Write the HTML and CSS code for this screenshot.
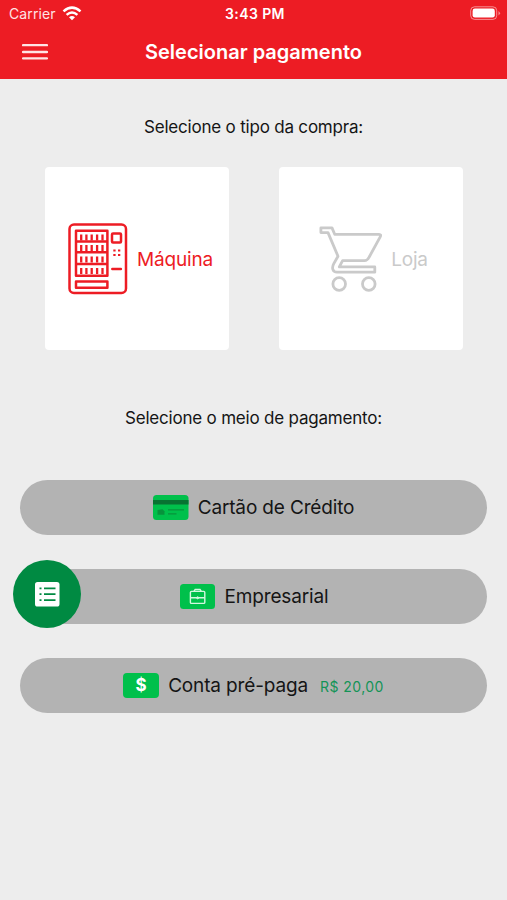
FILE: index.html
```html
<!DOCTYPE html>
<html lang="pt-BR">
<head>
<meta charset="utf-8">
<title>Selecionar pagamento</title>
<link rel="stylesheet" href="styles.css">
</head>
<body>
<header class="header">
  <div class="status">
    <div class="carrier"><span>Carrier</span>
      <svg width="20" height="15" viewBox="0 0 20 15" fill="none" stroke="#fff" stroke-width="2.5"><path d="M1.5 5.4Q10-2.2 18.5 5.4M4.6 8.9Q10 4.2 15.4 8.9"/><path d="M7 11.2Q10 8.9 13 11.2L10 14.2Z" fill="#fff" stroke="none"/></svg>
    </div>
    <span class="clock">3:43 PM</span>
    <svg class="battery" width="31" height="15" viewBox="0 0 31 15"><rect x=".7" y=".8" width="26" height="12.6" rx="3.8" fill="none" stroke="#fff" stroke-opacity=".5"/><rect x="2.6" y="2.6" width="22.2" height="9" rx="2.3" fill="#fff"/><path d="M28.5 5v4.5q3-2.2 0-4.5" fill="#fff" fill-opacity=".5"/></svg>
  </div>
  <div class="nav">
    <svg class="menu" width="26" height="16" viewBox="0 0 26 16" stroke="#ffe3e4" stroke-width="2.3" stroke-linecap="round"><path d="M1 1.2h24M1 8h24M1 14.4h24"/></svg>
    <h1 class="title">Selecionar pagamento</h1>
  </div>
</header>
<main class="main">
  <p class="prompt prompt-type">Selecione o tipo da compra:</p>
  <div class="types">
    <div class="card active">
      <svg width="60" height="72" viewBox="0 0 60 72" fill="none" stroke="#ed1c24" stroke-width="2.5" stroke-linejoin="round">
        <rect x="1.5" y="1.5" width="56.5" height="68.5" rx="4.5"/>
        <path d="M8 7.8h31.4v45H8zM8 18.4h31.4M8 29.2h31.4M8 41h31.4M8 58.5h31.4v6.2H8z"/>
        <path stroke-width="2.3" d="M13.2 11.5v6M18.4 11.5v6M23.7 11.5v6M29.1 11.5v6M34.5 11.5v6M13.2 22v6M18.4 22v6M23.7 22v6M29.1 22v6M34.5 22v6M13.2 33.5v6M18.4 33.5v6M23.7 33.5v6M29.1 33.5v6M34.5 33.5v6M13.2 45v6M18.4 45v6M23.7 45v6M29.1 45v6M34.5 45v6"/>
        <rect x="44" y="10.5" width="9" height="9" rx="1"/>
        <path stroke-width="2" d="M45.3 27.5h2.3M50 27.5h2.3M45.3 32h2.3M50 32h2.3"/><path d="M44.3 46h8.6" stroke-linecap="round"/>
      </svg>
      <span class="machine-label">Máquina</span>
    </div>
    <div class="card">
      <svg width="64" height="66" viewBox="0 0 64 66" fill="none" stroke="#cacaca" stroke-width="2.8" stroke-linejoin="round"><path d="M1.9 1.9H13L15.7 8.3H60Q62.5 8.4 61.2 10.8L50.2 31Q48.4 34.7 45.5 34.7H23.6L20.3 40.9H55.8V46.2H18C13.4 46.2 12.6 41.5 14.8 37.6L19 30.2L9 6.6H1.9Z"/><circle cx="20.2" cy="58" r="6.3"/><circle cx="49.8" cy="58" r="6.3"/></svg>
      <span class="store-label">Loja</span>
    </div>
  </div>
  <p class="prompt prompt-method">Selecione o meio de pagamento:</p>
  <div class="methods">
    <div class="pill credit">
      <svg width="36" height="26" viewBox="0 0 36 26"><rect width="35.5" height="25" rx="3.5" fill="#00c04b"/><path d="M0 5h35.5v4.6H0z" fill="#087332"/><path d="M4.5 15l5-.7 2 2v3.5h-7z" fill="#07933c"/><path d="M15 14.8h16M15 18.8h8.5" stroke="#07933c" stroke-width="1.3"/></svg>
      <span class="method-name">Cartão de Crédito</span>
    </div>
    <div class="pill business">
      <svg width="36" height="26" viewBox="0 0 36 26"><rect width="35" height="25" rx="3.5" fill="#00c04b"/><g fill="none" stroke="#d3f7df" stroke-width="1.4"><rect x="10.4" y="7.4" width="14.4" height="12" rx="1"/><path d="M14 7.2l1.2-1.7h4.8l1.2 1.7M10.4 13.8h14.4"/><circle cx="17.6" cy="13.8" r="1" fill="#d3f7df" stroke-width="1"/></g></svg>
      <span class="method-name">Empresarial</span>
      <div class="fab"><svg width="25" height="25" viewBox="0 0 25 25"><rect width="24.5" height="24.5" rx="2.6" fill="#fff"/><path d="M4.5 6.4h2M9 6.4h11.5M4.5 12.2h2M9 12.2h11.5M4.5 18.2h2M9 18.2h11.5" stroke="#008a42" stroke-width="1.7"/></svg></div>
    </div>
    <div class="pill prepaid">
      <span class="money">$</span>
      <span class="method-name">Conta pré-paga</span>
      <span class="balance">R$ 20,00</span>
    </div>
  </div>
</main>
</body>
</html>
```
FILE: styles.css
```css
* { box-sizing: border-box; }
body { margin: 0; min-height: 900px; background: #ededed; color: #151515; font-family: Inter, "Liberation Sans", sans-serif; }
svg { display: block; flex: none; }
.header { height: 79px; background: #ed1c24; color: #fff; }
.status { height: 27px; display: grid; grid-template-columns: 1fr auto 1fr; align-items: center; padding: 0 6px 0 9px; }
.carrier { display: flex; gap: 6px; align-items: center; font-size: 14px; letter-spacing: .1px; color: #ffe3e4; }
.clock { font-size: 14px; font-weight: 600; letter-spacing: .4px; }
.battery { justify-self: end; }
.nav { height: 50px; display: grid; grid-template-columns: 26px 1fr 26px; align-items: center; padding: 0 22px; }
.title { margin: 0; text-align: center; font-size: 20px; font-weight: 600; line-height: 28px; white-space: nowrap; }
.main { display: flex; flex-direction: column; }
.prompt { margin: 0; text-align: center; font-size: 17px; line-height: 24px; letter-spacing: -.2px; }
.prompt-type { margin-top: 36px; }
.types { margin: 28px 44px 0 45px; display: grid; grid-template-columns: 184px 184px; justify-content: space-between; }
.card { height: 183px; padding: 1px 0 0 5px; background: #fff; border-radius: 4px; display: flex; align-items: center; justify-content: center; gap: 8px; color: #cacaca; font-size: 19px; letter-spacing: -.2px; }
.active { padding-left: 7px; color: #ed1c24; gap: 9px; }
.prompt-method { margin-top: 56px; }
.methods { margin: 50px 20px 0; display: grid; gap: 34px; }
.pill { position: relative; height: 55px; border-radius: 28px; background: #b3b3b3; display: flex; justify-content: center; align-items: center; gap: 9px; }
.method-name { font-size: 19px; letter-spacing: -.15px; white-space: nowrap; }
.business { padding-left: 1px; }
.fab { position: absolute; left: -7px; top: -9px; width: 68px; height: 68px; border-radius: 50%; background: #008a42; display: flex; align-items: center; justify-content: center; }
.money { width: 36px; height: 25px; border-radius: 4px; background: #00c04b; color: #fff; font-size: 17px; font-weight: 700; line-height: 25px; text-align: center; }
.balance { margin: 1px 0 0 3px; color: #149357; font-size: 14px; letter-spacing: .45px; white-space: nowrap; }
```
